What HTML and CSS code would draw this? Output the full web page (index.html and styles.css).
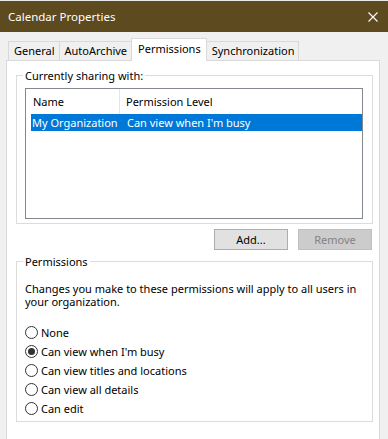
FILE: index.html
```html
<!DOCTYPE html>
<html lang="en">
<head>
    <meta charset="UTF-8">
    <meta name="viewport" content="width=device-width, initial-scale=1.0">
    <title>Calendar Properties</title>
    <link rel="stylesheet" href="styles.css">
</head>
<body>
    <div class="topline"></div>
    <div class="titlebar">
        <span class="title">Calendar Properties</span>
        <svg class="close" width="10" height="10" viewBox="0 0 10 10">
            <path d="M0.5 0.5 L9.5 9.5 M9.5 0.5 L0.5 9.5" stroke="#fff" stroke-width="1.1" fill="none"/>
        </svg>
    </div>

    <div class="tabs">
        <div class="tab">General</div>
        <div class="tab">AutoArchive</div>
        <div class="tab active">Permissions</div>
        <div class="tab">Synchronization</div>
    </div>

    <div class="panel">
        <fieldset class="group sharing">
            <legend>Currently sharing with:</legend>
            <div class="listview">
                <div class="list-head">
                    <div class="col-name">Name</div>
                    <div class="col-level">Permission Level</div>
                </div>
                <div class="list-row selected">
                    <div class="col-name">My Organization</div>
                    <div class="col-level">Can view when I'm busy</div>
                </div>
            </div>
        </fieldset>

        <div class="buttons">
            <button class="btn">Add...</button>
            <button class="btn" disabled>Remove</button>
        </div>

        <fieldset class="group perms">
            <legend>Permissions</legend>
            <div class="note">
                <div>Changes you make to these permissions will apply to all users in</div>
                <div>your organization.</div>
            </div>
            <div class="radios">
                <label class="radio"><span class="circle"></span>None</label>
                <label class="radio"><span class="circle checked"></span>Can view when I'm busy</label>
                <label class="radio"><span class="circle"></span>Can view titles and locations</label>
                <label class="radio"><span class="circle"></span>Can view all details</label>
                <label class="radio"><span class="circle"></span>Can edit</label>
            </div>
        </fieldset>
    </div>
</body>
</html>
```

FILE: styles.css
```css
body {
    margin: 0;
    background-color: #f0f0f0;
    font-family: "Noto Sans", "Open Sans", sans-serif;
    font-size: 11px;
    color: #000;
    overflow: hidden;
    white-space: nowrap;
}

.topline {
    height: 1px;
    background-color: #e8e8e8;
}

.titlebar {
    height: 31px;
    background-color: #5e4a1f;
    display: flex;
    align-items: center;
    justify-content: space-between;
    padding: 0 10px 0 8px;
    color: #fff;
}

.title {
    font-size: 11.5px;
}

.close {
    display: block;
}

/* tab strip */
.tabs {
    display: flex;
    align-items: flex-end;
    height: 22px;
    margin-top: 6px;
    padding-left: 9px;
}

.tab {
    height: 19px;
    box-sizing: border-box;
    border: 1px solid #d9d9d9;
    border-bottom: none;
    margin-left: -1px;
    padding: 0 4px 0 5px;
    line-height: 17px;
    background-color: #f0f0f0;
}

.tab.active {
    height: 23px;
    margin-bottom: -1px;
    padding: 0 5px 0 6px;
    background-color: #fff;
    position: relative;
    z-index: 1;
    line-height: 19px;
}

.panel {
    margin: 0 8px 0 6px;
    height: 400px;
    box-sizing: border-box;
    border: 1px solid #d9d9d9;
    background-color: #fff;
    overflow: hidden;
}

/* group boxes */
.group {
    margin: 0 6px 0 9px;
    padding: 0;
    border: 1px solid #dcdcdc;
}

.group legend {
    margin-left: 6px;
    padding: 0 2px;
    line-height: 15px;
}

.sharing {
    margin-top: 7px;
}

.listview {
    margin: 5px 9px 4px 8px;
    height: 131px;
    box-sizing: border-box;
    border: 1px solid #828790;
}

.list-head {
    display: flex;
    height: 25px;
    align-items: center;
}

.list-head .col-name {
    width: 94px;
    height: 100%;
    box-sizing: border-box;
    padding-left: 7px;
    border-right: 1px solid #e5e5e5;
    display: flex;
    align-items: center;
}

.list-head .col-level {
    padding-left: 6px;
}

.list-row {
    display: flex;
    align-items: center;
    height: 17px;
    margin-left: 5px;
}

.list-row.selected {
    background-color: #0078d7;
    color: #fff;
}

.list-row .col-name {
    width: 90px;
    padding-left: 1px;
    box-sizing: border-box;
}

.list-row .col-level {
    padding-left: 6px;
}

/* buttons */
.buttons {
    display: flex;
    justify-content: flex-end;
    gap: 10px;
    margin-top: 5px;
    padding-right: 7px;
}

.btn {
    width: 74px;
    height: 21px;
    padding: 0;
    font-family: inherit;
    font-size: 11px;
    color: #000;
    background-color: #e1e1e1;
    border: 1px solid #adadad;
}

.btn:disabled {
    background-color: #cccccc;
    border-color: #bfbfbf;
    color: #838383;
}

/* permissions group */
.perms {
    margin-top: 4px;
    padding-bottom: 3px;
}

.note {
    margin: 13px 0 0 8px;
    line-height: 13px;
}

.radios {
    margin: 15px 0 0 8px;
}

.radio {
    display: flex;
    align-items: center;
    height: 19px;
}

.circle {
    width: 13px;
    height: 13px;
    box-sizing: border-box;
    border: 1px solid #333;
    border-radius: 50%;
    background-color: #fff;
    margin-right: 3px;
    display: flex;
    align-items: center;
    justify-content: center;
}

.circle.checked::after {
    content: "";
    width: 7px;
    height: 7px;
    border-radius: 50%;
    background-color: #333;
}
```
